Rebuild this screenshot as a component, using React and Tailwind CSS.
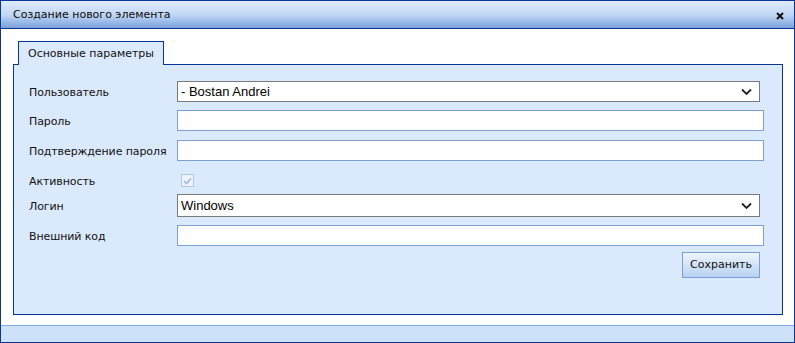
import React from 'react';

const Chevron = () => (
  <svg width="11" height="7" viewBox="0 0 11 7" className="absolute right-[7px] top-1/2 -translate-y-1/2">
    <polyline points="1,1 5.5,5.5 10,1" fill="none" stroke="#222" strokeWidth="1.8" />
  </svg>
);

const SelectBox = ({ value, h = 'h-[21px]' }) => (
  <div className={`relative ${h} flex-1 mr-[4px] bg-white border border-[#7a7a7a] flex items-center pl-[3px] text-[13px] text-black font-['Liberation_Sans',Arial,sans-serif]`}>
    {value}
    <Chevron />
  </div>
);

const TextBox = () => (
  <div className="h-[21px] flex-1 bg-white border border-[#7f9fd0]" />
);

const Row = ({ label, className = '', children }) => (
  <div className={`flex items-center ${className}`}>
    <div className="w-[148px] shrink-0 pt-[3px] text-[11px] tracking-[-0.1px] text-[#111]">{label}</div>
    {children}
  </div>
);

export default function App() {
  return (
    <div className="w-[795px] h-[343px] flex flex-col border border-[#0a3593] bg-white font-['DejaVu_Sans',Verdana,sans-serif]">
      {/* Header */}
      <div className="h-[28px] shrink-0 flex items-center justify-between pl-[12px] pr-[10px] pt-[2px] border-b border-[#0a3593] bg-gradient-to-b from-[#dfeafb] via-[#c3d8f5] to-[#7aa2dc]">
        <span className="text-[11px] text-[#0c0c0c]">Создание нового элемента</span>
        <svg width="8" height="8" viewBox="0 0 8 8">
          <path d="M1 1 L7 7 M7 1 L1 7" stroke="#111" strokeWidth="2" />
        </svg>
      </div>

      {/* Body */}
      <div className="flex-1 flex flex-col pt-[12px] pl-[12px] pr-[11px]">
        <div className="flex pl-[5px]">
          <div className="relative z-10 -mb-px h-[24px] w-[146px] flex items-center justify-center pt-[2px] border border-b-0 border-[#0a3593] bg-[#dbe9fc] text-[11px] text-[#111]">
            Основные параметры
          </div>
        </div>
        <div className="h-[251px] flex flex-col border border-[#0a3593] bg-[#dbe9fc] pl-[15px] pr-[18px] pt-[16px]">
          <Row label="Пользователь">
            <SelectBox value="- Bostan Andrei" />
          </Row>
          <Row label="Пароль" className="mt-[8px]">
            <TextBox />
          </Row>
          <Row label="Подтверждение пароля" className="mt-[9px]">
            <TextBox />
          </Row>
          <Row label="Активность" className="mt-[9px] h-[21px]">
            <div className="ml-[4px] w-[13px] h-[13px] border border-[#b4c8e4] bg-[#edf3fc] flex items-center justify-center">
              <svg width="9" height="8" viewBox="0 0 9 8">
                <polyline points="1,4 3.5,6.5 8,1.5" fill="none" stroke="#9cb9df" strokeWidth="1.6" />
              </svg>
            </div>
          </Row>
          <Row label="Логин" className="mt-[3px]">
            <SelectBox value="Windows" h="h-[23px]" />
          </Row>
          <Row label="Внешний код" className="mt-[8px]">
            <TextBox />
          </Row>
          <div className="flex justify-end mt-[6px] pr-[4px]">
            <button className="h-[26px] w-[78px] border border-[#7b9fcf] bg-gradient-to-b from-[#edf4fd] to-[#b8d2f1] text-[11px] text-[#111]">
              Сохранить
            </button>
          </div>
        </div>
        <div className="flex-1" />
      </div>

      {/* Footer */}
      <div className="h-[17px] shrink-0 border-t border-[#86aadf] bg-[#cde1f8]" />
    </div>
  );
}
